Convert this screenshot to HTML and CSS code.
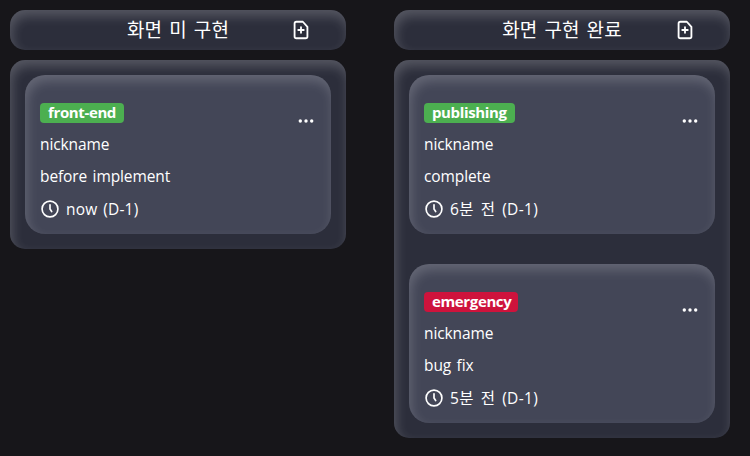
FILE: index.html
```
<!DOCTYPE html>
<html lang="ko">
<head>
<meta charset="utf-8">
<title>Board</title>
<link rel="stylesheet" href="styles.css">
</head>
<body>
<svg class="defs" width="0" height="0" aria-hidden="true">
  <symbol id="add" viewBox="0 0 24 24"><path d="M14 3H7a2 2 0 0 0-2 2v14a2 2 0 0 0 2 2h10a2 2 0 0 0 2-2V8.500L14 3zM12 9v6M9 12h6"/></symbol>
  <symbol id="clock" viewBox="0 0 24 24"><circle cx="12" cy="12" r="9.500"/><path d="M12 7v5l2 3"/></symbol>
  <symbol id="more" viewBox="0 0 16 16"><circle cx="2.300" cy="8" r="1.700"/><circle cx="8" cy="8" r="1.700"/><circle cx="13.700" cy="8" r="1.700"/></symbol>
</svg>
<main class="board">
  <section class="column">
    <header class="head"><h2 class="title">화면 미 구현</h2><svg class="add"><use href="#add"/></svg></header>
    <div class="list">
      <article class="card">
        <div class="top"><span class="tag front">front-end</span><svg class="more"><use href="#more"/></svg></div>
        <p class="line">nickname</p>
        <p class="line">before implement</p>
        <p class="line time"><svg class="clock"><use href="#clock"/></svg><span class="now">now (D-1)</span></p>
      </article>
    </div>
  </section>
  <section class="column">
    <header class="head"><h2 class="title">화면 구현 완료</h2><svg class="add"><use href="#add"/></svg></header>
    <div class="list">
      <article class="card">
        <div class="top"><span class="tag publishing">publishing</span><svg class="more"><use href="#more"/></svg></div>
        <p class="line">nickname</p>
        <p class="line">complete</p>
        <p class="line time"><svg class="clock"><use href="#clock"/></svg><span class="ago">6분 전 (D-1)</span></p>
      </article>
      <article class="card">
        <div class="top"><span class="tag emergency">emergency</span><svg class="more"><use href="#more"/></svg></div>
        <p class="line">nickname</p>
        <p class="line">bug fix</p>
        <p class="line time"><svg class="clock"><use href="#clock"/></svg><span class="ago">5분 전 (D-1)</span></p>
      </article>
    </div>
  </section>
</main>
</body>
</html>
```
FILE: styles.css
```
* { box-sizing: border-box; }
body {
  margin: 0;
  min-height: 456px;
  background: #17161a;
  color: #fff;
  font: 15.5px/24px "Open Sans", "Noto Sans CJK KR", sans-serif;
}
.defs { display: none; }
h2, p { margin: 0; }
svg { flex: none; fill: none; stroke: currentColor; stroke-width: 2; stroke-linecap: round; stroke-linejoin: round; }
.board { display: flex; align-items: flex-start; gap: 48px; padding: 10px; }
.column { flex: none; width: 336px; display: flex; flex-direction: column; gap: 10px; }
.head, .list {
  background: #2c2e3b;
  border-radius: 15px;
  box-shadow: inset 2px 6px 12px rgba(255, 255, 255, .2);
}
.head { height: 40px; display: grid; grid-template-columns: 1fr auto 1fr; align-items: center; }
.title { grid-column: 2; font-size: 19px; line-height: 40px; font-weight: 400; letter-spacing: .1px; word-spacing: 2px; white-space: nowrap; }
.add { width: 22px; height: 22px; justify-self: end; margin-right: 34px; }
.list { padding: 15px; display: flex; flex-direction: column; gap: 30px; }
.card {
  height: 159px;
  padding: 25px 15px 0;
  background: #434657;
  border-radius: 20px;
  box-shadow: inset 2px 6px 12px rgba(255, 255, 255, .18);
}
.top { height: 32px; display: flex; justify-content: space-between; align-items: flex-start; }
.tag {
  height: 20px;
  margin-top: 3px;
  padding: 0 8px;
  border-radius: 4px;
  background: #4caf50;
  font-size: 15px;
  line-height: 19px;
  font-weight: 700;
  letter-spacing: -.37px;
  white-space: nowrap;
}
.front { width: 84px; }
.publishing { width: 91px; }
.emergency { width: 94px; background: #ce133c; }
.more { width: 16px; height: 16px; margin: 13px 2px 0 0; fill: currentColor; stroke: none; }
.line { height: 32px; white-space: nowrap; letter-spacing: -.1px; word-spacing: 1.500px; }
.time { height: 26px; display: flex; align-items: center; gap: 6px; }
.now { letter-spacing: .2px; }
.ago { letter-spacing: .35px; word-spacing: 2.500px; }
.clock { width: 20px; height: 20px; }
```
